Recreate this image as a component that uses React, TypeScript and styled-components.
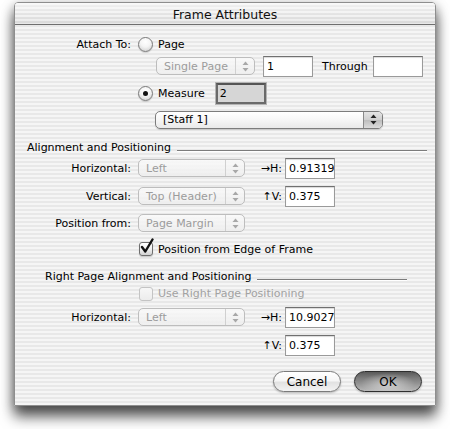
import styled, { createGlobalStyle } from 'styled-components'

const GlobalStyle = createGlobalStyle`
  html, body {
    margin: 0;
    padding: 0;
    background: #ffffff;
  }
  body {
    font-family: 'DejaVu Sans', 'Liberation Sans', sans-serif;
    font-size: 11px;
    color: #000;
  }
`

const pinstripe = `repeating-linear-gradient(to bottom, #f5f5f5 0px, #f5f5f5 2px, #e8e8e8 2px, #e8e8e8 4px)`

const Arrows = ({ disabled }: { disabled?: boolean }) => (
  <svg width='7' height='11' viewBox='0 0 7 11'>
    <path d='M3.5 0.5 L6.5 4 L0.5 4 Z' fill={disabled ? '#a8a8a8' : '#222'} />
    <path d='M3.5 10.5 L6.5 7 L0.5 7 Z' fill={disabled ? '#a8a8a8' : '#222'} />
  </svg>
)

const CheckMark = () => (
  <svg width='16' height='17' viewBox='0 0 16 17'>
    <path d='M3 9 L6.3 13.5 L13.5 1.5' fill='none' stroke='#111' strokeWidth='2.4' strokeLinecap='round' strokeLinejoin='round' />
  </svg>
)

const App = () => {
  return (
    <>
      <GlobalStyle />
      <Stage>
        <Window>
          <TitleBar>
            <Title>Frame Attributes</Title>
          </TitleBar>

          <Body>
            <Row $mt={9} $h={20}>
              <LabelCell>Attach To:</LabelCell>
              <Radio />
              <OptionText>Page</OptionText>
            </Row>

            <Row $mt={2} $h={20} $indent={141}>
              <Popup $width={99} $disabled>
                <PopupText>Single Page</PopupText>
                <PopupArrows $disabled>
                  <Arrows disabled />
                </PopupArrows>
              </Popup>
              <Field $width={50} $ml={8}>1</Field>
              <InlineText>Through</InlineText>
              <Field $width={50} $ml={5} />
            </Row>

            <Row $mt={7} $h={21} $indent={123}>
              <Radio $checked />
              <OptionText>Measure</OptionText>
              <Field $width={50} $ml={11} $focused>2</Field>
            </Row>

            <Row $mt={6} $h={19} $indent={140}>
              <Popup $width={228}>
                <PopupText>[Staff 1]</PopupText>
                <PopupArrows>
                  <Arrows />
                </PopupArrows>
              </Popup>
            </Row>

            <SectionHeader $mt={10} $inset={12} $right={8}>
              <SectionTitle>Alignment and Positioning</SectionTitle>
              <SectionRule />
            </SectionHeader>

            <Row $mt={2} $h={22}>
              <LabelCell>Horizontal:</LabelCell>
              <Popup $width={107} $disabled>
                <PopupText>Left</PopupText>
                <PopupArrows $disabled>
                  <Arrows disabled />
                </PopupArrows>
              </Popup>
              <AxisLabel>→H:</AxisLabel>
              <Field $width={50}>0.91319</Field>
            </Row>

            <Row $mt={6} $h={22}>
              <LabelCell>Vertical:</LabelCell>
              <Popup $width={107} $disabled>
                <PopupText>Top (Header)</PopupText>
                <PopupArrows $disabled>
                  <Arrows disabled />
                </PopupArrows>
              </Popup>
              <AxisLabel>↑V:</AxisLabel>
              <Field $width={50}>0.375</Field>
            </Row>

            <Row $mt={5} $h={22}>
              <LabelCell>Position from:</LabelCell>
              <Popup $width={107} $disabled>
                <PopupText>Page Margin</PopupText>
                <PopupArrows $disabled>
                  <Arrows disabled />
                </PopupArrows>
              </Popup>
            </Row>

            <Row $mt={6} $h={18} $indent={124}>
              <CheckBox>
                <CheckMarkSlot>
                  <CheckMark />
                </CheckMarkSlot>
              </CheckBox>
              <OptionText>Position from Edge of Frame</OptionText>
            </Row>

            <SectionHeader $mt={10} $inset={30} $right={28}>
              <SectionTitle>Right Page Alignment and Positioning</SectionTitle>
              <SectionRule />
            </SectionHeader>

            <Row $mt={1} $h={17} $indent={124}>
              <CheckBox $disabled />
              <OptionText $disabled>Use Right Page Positioning</OptionText>
            </Row>

            <Row $mt={4} $h={22}>
              <LabelCell>Horizontal:</LabelCell>
              <Popup $width={107} $disabled>
                <PopupText>Left</PopupText>
                <PopupArrows $disabled>
                  <Arrows disabled />
                </PopupArrows>
              </Popup>
              <AxisLabel>→H:</AxisLabel>
              <Field $width={50}>10.9027</Field>
            </Row>

            <Row $mt={6} $h={22}>
              <LabelCell />
              <PopupSpacer />
              <AxisLabel>↑V:</AxisLabel>
              <Field $width={50}>0.375</Field>
            </Row>

            <ButtonRow>
              <PushButton>Cancel</PushButton>
              <PushButton $primary>OK</PushButton>
            </ButtonRow>
          </Body>
        </Window>
      </Stage>
    </>
  )
}

export default App

const Stage = styled.div`
  box-sizing: border-box;
  width: 450px;
  height: 429px;
  padding: 2px 0 0 14px;
  background: #ffffff;
  overflow: hidden;
`
const Window = styled.div`
  box-sizing: border-box;
  width: 422px;
  height: 404px;
  border: 1px solid #8e8e8e;
  border-radius: 4px 4px 0 0;
  background: ${pinstripe};
  box-shadow: 0 11px 14px rgba(0, 0, 0, 0.6), 0 3px 12px rgba(0, 0, 0, 0.35);
  display: flex;
  flex-direction: column;
`
const TitleBar = styled.div`
  height: 21px;
  border-bottom: 1px solid #6f6f6f;
  border-radius: 3px 3px 0 0;
  background: linear-gradient(to bottom, rgba(255, 255, 255, 0.55), rgba(255, 255, 255, 0) 60%, rgba(0, 0, 0, 0.04)),
    repeating-linear-gradient(to bottom, #f2f2f2 0px, #f2f2f2 2px, #e2e2e2 2px, #e2e2e2 4px);
  display: flex;
  align-items: center;
  justify-content: center;
`
const Title = styled.div`
  font-size: 12.5px;
  color: #111;
  padding-top: 1px;
`
const Body = styled.div`
  display: flex;
  flex-direction: column;
`
const Row = styled.div<{ $mt: number; $h: number; $indent?: number }>`
  display: flex;
  align-items: center;
  margin-top: ${({ $mt }) => $mt}px;
  height: ${({ $h }) => $h}px;
  padding-left: ${({ $indent }) => $indent ?? 0}px;
`
const LabelCell = styled.div`
  width: 116px;
  margin-right: 7px;
  text-align: right;
  white-space: nowrap;
`
const OptionText = styled.span<{ $disabled?: boolean }>`
  margin-left: 5px;
  white-space: nowrap;
  color: ${({ $disabled }) => ($disabled ? '#a2a2a2' : '#000')};
`
const InlineText = styled.span`
  margin-left: 9px;
  white-space: nowrap;
`
const Radio = styled.span<{ $checked?: boolean }>`
  box-sizing: border-box;
  position: relative;
  width: 15px;
  height: 15px;
  border-radius: 50%;
  border: 1px solid #7a7a7a;
  background: radial-gradient(circle at 50% 30%, #ffffff 0%, #f4f4f4 45%, #c9c9c9 100%);
  box-shadow: 0 1px 1px rgba(0, 0, 0, 0.15);
  flex-shrink: 0;

  &::after {
    content: '';
    display: ${({ $checked }) => ($checked ? 'block' : 'none')};
    position: absolute;
    left: 4px;
    top: 4px;
    width: 5px;
    height: 5px;
    border-radius: 50%;
    background: #111;
  }
`
const CheckBox = styled.span<{ $disabled?: boolean }>`
  box-sizing: border-box;
  position: relative;
  width: 14px;
  height: 14px;
  border-radius: 3px;
  border: 1px solid ${({ $disabled }) => ($disabled ? '#c4c4c4' : '#6e6e6e')};
  background: ${({ $disabled }) =>
    $disabled
      ? 'linear-gradient(to bottom, #f7f7f7, #ececec)'
      : 'linear-gradient(to bottom, #ffffff, #f1f1f1 50%, #d2d2d2)'};
  box-shadow: ${({ $disabled }) => ($disabled ? 'none' : '0 1px 1px rgba(0,0,0,0.18)')};
  flex-shrink: 0;
`
const CheckMarkSlot = styled.span`
  position: absolute;
  left: -1px;
  top: -5px;
  width: 16px;
  height: 17px;
  display: block;
`
const Popup = styled.div<{ $width: number; $disabled?: boolean }>`
  box-sizing: border-box;
  width: ${({ $width }) => $width}px;
  height: 18px;
  display: flex;
  align-items: stretch;
  border: 1px solid ${({ $disabled }) => ($disabled ? '#bdbdbd' : '#7c7c7c')};
  border-radius: 5px;
  background: ${({ $disabled }) =>
    $disabled
      ? 'linear-gradient(to bottom, rgba(250,250,250,0.85), rgba(238,238,238,0.85))'
      : 'linear-gradient(to bottom, #ffffff, #f6f6f6 50%, #e9e9e9)'};
  color: ${({ $disabled }) => ($disabled ? '#9c9c9c' : '#000')};
  box-shadow: ${({ $disabled }) => ($disabled ? 'none' : '0 1px 1px rgba(0,0,0,0.15)')};
  overflow: hidden;
`
const PopupText = styled.div`
  flex: 1;
  display: flex;
  align-items: center;
  padding-left: 7px;
  white-space: nowrap;
`
const PopupArrows = styled.div<{ $disabled?: boolean }>`
  width: 18px;
  display: flex;
  align-items: center;
  justify-content: center;
  border-left: 1px solid ${({ $disabled }) => ($disabled ? '#d0d0d0' : '#8a8a8a')};
  background: ${({ $disabled }) =>
    $disabled ? 'transparent' : 'linear-gradient(to bottom, #e4e4e4, #cfcfcf 50%, #bdbdbd 51%, #dcdcdc)'};
`
const PopupSpacer = styled.div`
  width: 107px;
`
const AxisLabel = styled.span`
  width: 28px;
  margin-left: 12px;
  padding-right: 3px;
  box-sizing: border-box;
  text-align: right;
  white-space: nowrap;
  font-size: 11px;
`
const Field = styled.div<{ $width: number; $ml?: number; $focused?: boolean }>`
  box-sizing: border-box;
  width: ${({ $width }) => $width}px;
  height: 21px;
  margin-left: ${({ $ml }) => $ml ?? 0}px;
  padding-left: ${({ $focused }) => ($focused ? 2 : 3)}px;
  display: flex;
  align-items: center;
  white-space: nowrap;
  overflow: hidden;
  background: ${({ $focused }) => ($focused ? '#d6d6d6' : '#ffffff')};
  border: ${({ $focused }) => ($focused ? '2px solid #6a6a6a' : '1px solid #9a9a9a')};
  border-top-color: ${({ $focused }) => ($focused ? '#555' : '#707070')};
  box-shadow: ${({ $focused }) =>
    $focused ? '0 0 0 1px #b4b4b4' : 'inset 0 1px 1px rgba(0, 0, 0, 0.15)'};
  font-size: 11px;
`
const SectionHeader = styled.div<{ $mt: number; $inset: number; $right: number }>`
  display: flex;
  align-items: center;
  height: 16px;
  margin-top: ${({ $mt }) => $mt}px;
  padding-left: ${({ $inset }) => $inset}px;
  padding-right: ${({ $right }) => $right}px;
`
const SectionTitle = styled.span`
  white-space: nowrap;
`
const SectionRule = styled.div`
  flex: 1;
  height: 1px;
  margin: 6px 0 0 6px;
  background: #7c7c7c;
  box-shadow: 0 1px 0 #ffffff;
`
const ButtonRow = styled.div`
  display: flex;
  justify-content: flex-end;
  gap: 13px;
  margin-top: 15px;
  padding-right: 13px;
`
const PushButton = styled.button<{ $primary?: boolean }>`
  box-sizing: border-box;
  width: 68px;
  height: 21px;
  border-radius: 11px;
  font-family: 'DejaVu Sans', 'Liberation Sans', sans-serif;
  font-size: 12px;
  color: #000;
  padding: 0;
  border: 1px solid ${({ $primary }) => ($primary ? '#2e2e2e' : '#7a7a7a')};
  background: ${({ $primary }) =>
    $primary
      ? 'radial-gradient(ellipse 55% 75% at 50% 62%, rgba(255,255,255,0.5), rgba(255,255,255,0) 75%), linear-gradient(to bottom, #5a5a5a 0%, #7e7e7e 35%, #8e8e8e 55%, #b8b8b8 100%)'
      : 'linear-gradient(to bottom, #ffffff 0%, #f6f6f6 45%, #e2e2e2 55%, #f3f3f3 100%)'};
  box-shadow: 0 1px 2px rgba(0, 0, 0, 0.25);
`
